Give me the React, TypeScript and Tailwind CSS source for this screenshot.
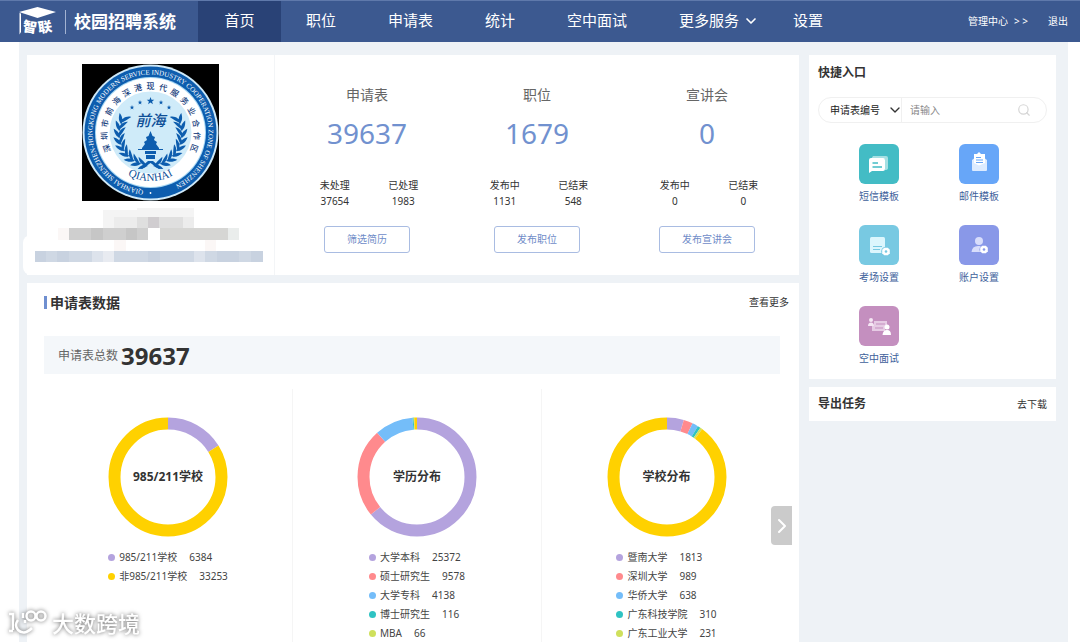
import { ReactNode } from "react";
import { ChevronDown, ChevronRight, Search } from "lucide-react";

const navItems = [
  { label: "首页", className: "w-[83px] bg-[#294276]" },
  { label: "职位", className: "w-[80px]" },
  { label: "申请表", className: "w-[99px]" },
  { label: "统计", className: "w-[80px]" },
  { label: "空中面试", className: "w-[114px]" },
  { label: "更多服务", className: "w-[130px]", more: true },
  { label: "设置", className: "w-[48px]" },
];

const stats = [
  {
    title: "申请表",
    total: 39637,
    parts: [
      { label: "未处理", value: 37654 },
      { label: "已处理", value: 1983 },
    ],
    action: "筛选简历",
  },
  {
    title: "职位",
    total: 1679,
    parts: [
      { label: "发布中", value: 1131 },
      { label: "已结束", value: 548 },
    ],
    action: "发布职位",
  },
  {
    title: "宣讲会",
    total: 0,
    parts: [
      { label: "发布中", value: 0 },
      { label: "已结束", value: 0 },
    ],
    action: "发布宣讲会",
  },
];

const TOTAL = 39637;
const palette = ["#b4a3de", "#ff8a8d", "#74bdf9", "#2fc3c3", "#cfe05c"];
const yellow = "#ffd100";

const charts = [
  {
    title: "985/211学校",
    items: [
      { label: "985/211学校", value: 6384, color: palette[0] },
      { label: "非985/211学校", value: 33253, color: yellow },
    ],
  },
  {
    title: "学历分布",
    items: [
      { label: "大学本科", value: 25372, color: palette[0] },
      { label: "硕士研究生", value: 9578, color: palette[1] },
      { label: "大学专科", value: 4138, color: palette[2] },
      { label: "博士研究生", value: 116, color: palette[3] },
      { label: "MBA", value: 66, color: palette[4] },
    ],
  },
  {
    title: "学校分布",
    items: [
      { label: "暨南大学", value: 1813, color: palette[0] },
      { label: "深圳大学", value: 989, color: palette[1] },
      { label: "华侨大学", value: 638, color: palette[2] },
      { label: "广东科技学院", value: 310, color: palette[3] },
      { label: "广东工业大学", value: 231, color: palette[4] },
    ],
  },
];

const Logo = () => (
  <svg width="38" height="32" viewBox="0 0 38 32" fill="#fff">
    <path d="M0 6 L18.5 1 L37 6 L18.5 12 Z" />
    <path d="M0.5 7 L2 7.5 V26 L0.5 28.5 Z" />
    <text x="4" y="26" fontSize="14" fontWeight="900" transform="rotate(8 11 21)">
      智
    </text>
    <text x="19" y="26" fontSize="14" fontWeight="900" transform="rotate(-8 26 21)">
      联
    </text>
  </svg>
);

const star = "M0 -4 L1 -1.3 L3.8 -1.2 L1.6 0.5 L2.4 3.2 L0 1.6 L-2.4 3.2 L-1.6 0.5 L-3.8 -1.2 L-1 -1.3 Z";
const leafAngles = [14, 27, 40, 53, 66, 79, 92, 105, 118];

const Seal = () => (
  <svg width="137" height="137" viewBox="0 0 137 137">
    <defs>
      <path id="ring" d="M68.5 126.5 A58 58 0 0 1 68.5 10.5 A58 58 0 0 1 68.5 126.5" />
      <path id="bottom" d="M20 68.5 A48.5 48.5 0 0 0 117 68.5" />
    </defs>
    <rect width="137" height="137" fill="#000" />
    <circle cx="68.5" cy="68.5" r="68" fill="#cfe9f8" />
    <circle cx="68.5" cy="68.5" r="66" fill="#0d5dae" />
    <circle cx="68.5" cy="68.5" r="55.5" fill="#a9d8f3" />
    <circle cx="68.5" cy="68.5" r="54.5" fill="#fff" />
    <circle cx="68.5" cy="68.5" r="41" fill="#cfebf9" />
    <text fontSize="7" fill="#fff" fontFamily="Liberation Serif, serif">
      <textPath href="#ring" startOffset="7">
        QIANHAI SHENZHEN-HONGKONG MODERN SERVICE INDUSTRY COOPERATION ZONE OF SHENZHEN
      </textPath>
    </text>
    <circle cx="68.5" cy="129" r="0.9" fill="#fff" />
    {"深圳市前海深港现代服务业合作区".split("").map((char, i) => (
      <text
        key={i}
        x="68.5"
        y="25"
        fontSize="8"
        fontWeight="500"
        textAnchor="middle"
        fill="#16407c"
        transform={`rotate(${(i - 7) * 15.7} 68.5 68.5)`}
      >
        {char}
      </text>
    ))}
    <text
      fontSize="11"
      fill="#0d4f97"
      textAnchor="middle"
      fontFamily="Liberation Serif, serif"
    >
      <textPath href="#bottom" startOffset="50%">
        QIANHAI
      </textPath>
    </text>
    <g fill="#0d5dae">
      <path d={star} transform="translate(68.5 37)" />
      <path d={star} transform="translate(58 38.5) scale(0.6)" />
      <path d={star} transform="translate(79 38.5) scale(0.6)" />
      <path d={star} transform="translate(50 43.5) scale(0.6)" />
      <path d={star} transform="translate(87 43.5) scale(0.6)" />
      <path d="M68.5 67 L70.5 72 L73 73 L72 76 L75 78 L74 80 L77 84 V86 H60 V84 L63 80 L62 78 L65 76 L64 73 L66.5 72 Z" />
      <path d="M63 87 H74 V90 H63 Z M64 91 H73 V95 H64 Z M56 85 H81 V86 H56 Z" />
      {leafAngles.map((a) => (
        <g key={a}>
          <g transform={`rotate(${a} 68.5 70) translate(68.5 101)`}>
            <path d="M5 1 C1 -2 -2 -4 -6 -6 C-5 -1 0 2 5 1 Z M5 -1 C0 0 -2 2 -4 6 C1 5 4 3 5 -1 Z" />
          </g>
          <g transform={`rotate(${-a} 68.5 70) translate(68.5 101)`}>
            <path d="M-5 1 C-1 -2 2 -4 6 -6 C5 -1 0 2 -5 1 Z M-5 -1 C0 0 2 2 4 6 C-1 5 -4 3 -5 -1 Z" />
          </g>
        </g>
      ))}
      <path d="M66 97 L58 104 L60 105 L68.5 99 L77 105 L79 104 L71 97 Z" />
    </g>
    <text
      x="68.5"
      y="62"
      fontSize="15"
      fontWeight="500"
      fontStyle="italic"
      textAnchor="middle"
      fill="#0d4f97"
    >
      前海
    </text>
  </svg>
);

// Masked company name and account lines
const MaskedInfo = () => (
  <svg width="230" height="56" viewBox="0 0 230 56" shapeRendering="crispEdges">
    <path fill="#f4f4f4" d="M69 2 H103 V0 H160 V20 H69 Z" />
    <path fill="#ececec" d="M80 9 H103 V20 H80 Z M149 9 H160 V20 H149 Z" />
    <path fill="#dfdfdf" d="M103 9 H149 V20 H103 Z" />
    <path fill="#d0cdd0" d="M114 9 H125 V20 H114 Z" />
    <path fill="#cfcfcf" d="M35 20 H114 V32 H35 Z" />
    <path fill="#c6c6c6" d="M57 20 H69 V32 H57 Z M92 20 H103 V32 H92 Z" />
    <path fill="#d6d6d4" d="M126 20 H194 V32 H126 Z" />
    <path fill="#eaedec" d="M194 20 H205 V32 H194 Z" />
    <path fill="#fbf7f6" d="M24 20 H35 V32 H24 Z M80 32 H92 V43 H80 Z M171 32 H182 V43 H171 Z" />
    <path fill="#cfd8e4" d="M1 43 H229 V54 H1 Z" />
    <path fill="#c8d2e0" d="M1 43 H12 V54 H1 Z M23 43 H35 V54 H23 Z M114 43 H126 V54 H114 Z M183 43 H205 V54 H183 Z M217 43 H229 V54 H217 Z" />
    <path fill="#dde3ec" d="M58 43 H69 V54 H58 Z M160 43 H171 V54 H160 Z" />
    <path fill="#e8ebf1" d="M69 43 H80 V54 H69 Z" />
  </svg>
);

const Gear = ({ x, y, hole }: { x: number; y: number; hole: string }) => (
  <g transform={`translate(${x} ${y})`}>
    <path
      fill="#fff"
      d="M-1.8 -3.8 H1.8 L3.8 -1.8 V1.8 L1.8 3.8 H-1.8 L-3.8 1.8 V-1.8 Z"
    />
    <circle r="1.3" fill={hole} />
  </g>
);

const shortcuts: { label: string; color: string; icon: ReactNode }[] = [
  {
    label: "短信模板",
    color: "bg-[#43bcc5]",
    icon: (
      <>
        <path fill="#a5e0e3" d="M14 12 H27 Q29 12 29 14 V24 Q29 26 26 26 V15 H12 Z" />
        <path fill="#fff" d="M12 14 H24 Q26 14 26 16 V25 Q26 27 24 27 H13 L10 29 V16 Q10 14 12 14 Z" />
        <path stroke="#43bcc5" strokeWidth="1.4" d="M13.5 19 H19 M13.5 23 H23" />
      </>
    ),
  },
  {
    label: "邮件模板",
    color: "bg-[#67a6f8]",
    icon: (
      <>
        <path fill="#fff" d="M18 10 L20 8 L22 10 H26 V22 H15 V10 Z" />
        <path stroke="#67a6f8" strokeWidth="1.2" d="M17 13.5 H22 M17 16 H24 M17 18.5 H24" />
        <path fill="#dcebff" d="M13 16 L15 14.5 V19 L20 21.5 L26 19 V14.5 L28 16 V26 Q28 27 27 27 H14 Q13 27 13 26 Z" />
      </>
    ),
  },
  {
    label: "考场设置",
    color: "bg-[#78c9e2]",
    icon: (
      <>
        <rect x="11" y="12" width="15" height="16" rx="1.5" fill="#dcf6fd" />
        <path stroke="#78c9e2" strokeWidth="1.2" d="M14 21.5 H23 M14 24.5 H21" />
        <circle cx="27" cy="26.5" r="4.8" fill="#78c9e2" />
        <Gear x={27} y={26.5} hole="#78c9e2" />
      </>
    ),
  },
  {
    label: "账户设置",
    color: "bg-[#8998e8]",
    icon: (
      <>
        <circle cx="20" cy="16" r="4" fill="#d8ddfb" />
        <path fill="#d8ddfb" d="M12.5 27 Q13 21 19 21 H23 V27 Z" />
        <circle cx="25" cy="24.5" r="4.5" fill="#8998e8" />
        <Gear x={25} y={24.5} hole="#8998e8" />
      </>
    ),
  },
  {
    label: "空中面试",
    color: "bg-[#c48fbf]",
    icon: (
      <>
        <path fill="#e6cbe4" d="M15 15 H28 V19 H26 V25 H13 V20 H15 Z" />
        <path stroke="#c48fbf" strokeWidth="1" d="M17 18 H26 M16 22 H24" />
        <circle cx="12" cy="14" r="2" fill="#f5e6f4" />
        <path fill="#f5e6f4" d="M9 20 Q9 16.5 12 16.5 Q15 16.5 15 20 Z" />
        <circle cx="28" cy="21" r="2.5" fill="#fff" />
        <path fill="#fff" d="M23.5 29 Q24 24 28 24 Q32 24 32 29 Z" />
      </>
    ),
  },
];

type Slice = { label: string; value: number; color: string };

const Donut = ({ title, items }: { title: string; items: Slice[] }) => {
  const radius = 53.5;
  const length = 2 * Math.PI * radius;
  const rest = TOTAL - items.reduce((sum, item) => sum + item.value, 0);
  const slices = [...items, { label: "其他", value: rest, color: yellow }];
  let offset = 0;
  return (
    <div className="grid place-items-center">
      <svg
        width="120"
        height="120"
        viewBox="0 0 120 120"
        fill="none"
        strokeWidth="12"
        className="col-start-1 row-start-1 -rotate-90"
      >
        {slices.map((item) => {
          const part = (item.value / TOTAL) * length;
          const start = offset;
          offset += part;
          return (
            <circle
              key={item.label}
              cx="60"
              cy="60"
              r={radius}
              stroke={item.color}
              strokeDasharray={`${part} ${length - part}`}
              strokeDashoffset={-start}
            />
          );
        })}
      </svg>
      <h3 className="col-start-1 row-start-1 text-xs font-bold">{title}</h3>
    </div>
  );
};

const Header = () => (
  <header className="flex h-[42px] items-stretch border-t border-[#5f79ab] bg-[#3c5990] pr-3 text-white">
    <div className="flex w-[198px] shrink-0 items-center pl-[19px]">
      <Logo />
      <span className="ml-2 h-6 w-px bg-[#a3b3d2]" />
      <h1 className="ml-2 text-[17px] leading-6 font-bold whitespace-nowrap">校园招聘系统</h1>
    </div>
    <nav className="flex">
      {navItems.map((item) => (
        <a
          key={item.label}
          href="#"
          className={`flex shrink-0 items-center justify-center pb-0.5 text-[15px] whitespace-nowrap ${item.className}`}
        >
          {item.label}
          {item.more && <ChevronDown className="ml-1 size-4" strokeWidth={2.5} />}
        </a>
      ))}
    </nav>
    <div className="ml-auto flex items-center gap-5 text-[10px] whitespace-nowrap">
      <a href="#" className="flex gap-1.5">
        管理中心 <span>&gt; &gt;</span>
      </a>
      <a href="#">退出</a>
    </div>
  </header>
);

const Overview = () => (
  <section className="flex h-[220px] bg-white">
    <div className="relative flex w-[248px] shrink-0 flex-col items-center border-r border-[#f3f5f7] pt-[9px]">
      <span className="absolute bottom-0 -left-1 h-10 w-2 rounded-l-full bg-white" />
      <Seal />
      <div className="mt-[7px] mr-1">
        <MaskedInfo />
      </div>
    </div>
    <div className="grid flex-1 grid-cols-3 px-[7px] pt-7">
      {stats.map((stat) => (
        <div key={stat.title} className="flex flex-col items-center">
          <h2 className="text-[14px] leading-6 text-[#666]">{stat.title}</h2>
          <p className="mt-1 text-[28px] leading-11 text-[#7191cf]">{stat.total}</p>
          <dl className="mt-[22px] ml-1 grid w-[137px] grid-cols-2 text-center text-[10px] leading-4 text-[#333]">
            {stat.parts.map((part) => (
              <div key={part.label}>
                <dt>{part.label}</dt>
                <dd>{part.value}</dd>
              </div>
            ))}
          </dl>
          <button className="mt-[17px] h-[27px] rounded-[3px] border border-[#a9bce2] px-[22px] text-[10px] text-[#6f8cc8]">
            {stat.action}
          </button>
        </div>
      ))}
    </div>
  </section>
);

const ApplicationData = () => (
  <section className="relative flex-1 bg-white pt-[7px]">
    <div className="flex h-6 items-center justify-between pr-[10px] pl-[17px]">
      <h2 className="flex items-center gap-[3px] text-[14px] font-bold">
        <span className="h-[13px] w-[3px] bg-[#6f8fd0]" />
        申请表数据
      </h2>
      <a href="#" className="text-[10px]">
        查看更多
      </a>
    </div>
    <p className="mr-[19px] ml-[17px] mt-[22px] flex h-[38px] items-center gap-[3px] bg-[#f4f7fa] pt-0.5 pl-[14px] text-[12px] text-[#666]">
      申请表总数
      <strong className="text-[24px] leading-8 text-[#333]">{TOTAL}</strong>
    </p>
    <div className="mt-[15px] mr-2 ml-[17px] grid grid-cols-3 divide-x divide-[#f5f5f5]">
      {charts.map((chart) => (
        <div key={chart.title} className="flex flex-col items-center pt-7">
          <Donut title={chart.title} items={chart.items} />
          <ul className="mt-[11px] text-[10px] leading-[19px] text-[#444]">
            {chart.items.map((item) => (
              <li key={item.label} className="flex items-center">
                <span
                  className="mr-1 size-[7px] rounded-full"
                  style={{ backgroundColor: item.color }}
                />
                {item.label}
                <span className="ml-3">{item.value}</span>
              </li>
            ))}
          </ul>
        </div>
      ))}
    </div>
    <button
      aria-label="下一页"
      className="absolute top-[223px] right-[7px] flex h-[39px] w-[21px] items-center justify-center rounded-l bg-[#cbcbcb] text-white"
    >
      <ChevronRight className="size-6 shrink-0" strokeWidth={2} />
    </button>
  </section>
);

const Shortcuts = () => (
  <section className="h-[324px] bg-white px-[9px] pt-2">
    <h2 className="text-[12px] leading-5 font-bold">快捷入口</h2>
    <form className="mt-[14px] flex h-[26px] items-center rounded-full border border-[#f0f0f0] text-[10px]">
      <div className="relative flex h-full items-center border-r border-[#f0f0f0]">
        <select
          aria-label="查询字段"
          className="w-[82px] appearance-none bg-transparent pl-[11px] text-[#222] outline-none"
        >
          <option>申请表编号</option>
        </select>
        <ChevronDown className="pointer-events-none absolute -right-0.5 size-4" />
      </div>
      <input
        aria-label="关键字"
        placeholder="请输入"
        className="min-w-0 flex-1 pl-2 outline-none placeholder:text-[#888]"
      />
      <button type="button" aria-label="搜索" className="mr-[15px] text-[#d5d5d5]">
        <Search className="size-3.5" />
      </button>
    </form>
    <div className="mt-[21px] grid grid-cols-2 gap-y-[21px] pr-[18px] pl-[11px]">
      {shortcuts.map((item) => (
        <a
          key={item.label}
          href="#"
          className="flex flex-col items-center gap-1 text-[10px] leading-4 text-[#405f9b]"
        >
          <span className={`rounded-md ${item.color}`}>
            <svg width="40" height="40" viewBox="0 0 40 40" fill="none">
              {item.icon}
            </svg>
          </span>
          {item.label}
        </a>
      ))}
    </div>
  </section>
);

const Watermark = () => (
  <div className="absolute bottom-1 left-2 flex items-center gap-1 text-white drop-shadow-[0_0_2px_#666]">
    <svg width="40" height="30" viewBox="0 0 40 30" fill="none" stroke="#fff" strokeWidth="2.5">
      <path d="M1 6 H5 V22 M1 23 H5" />
      <path d="M10 12 Q6 17 10 22 Q16 28 24 20" />
      <path d="M15 10 V5 M17 12 V15" />
      <circle cx="23" cy="8" r="4.5" />
      <circle cx="33" cy="8" r="4.5" />
    </svg>
    <span className="text-[22px] leading-8 font-medium">大数跨境</span>
  </div>
);

const App = () => {
  return (
    <div className="relative flex min-h-screen flex-col bg-white font-['Noto_Sans','Noto_Sans_CJK_SC',sans-serif] text-[#333]">
      <Header />
      <main className="mr-3 ml-[19px] flex flex-1 gap-[10px] bg-[#eef2f6] pt-[13px] pr-3 pl-2">
        <div className="flex flex-1 flex-col gap-2">
          <Overview />
          <ApplicationData />
        </div>
        <aside className="flex w-[247px] shrink-0 flex-col gap-2">
          <Shortcuts />
          <section className="flex h-[34px] items-center justify-between bg-white px-[9px]">
            <h2 className="text-[12px] font-bold">导出任务</h2>
            <a href="#" className="text-[10px]">
              去下载
            </a>
          </section>
        </aside>
      </main>
      <Watermark />
    </div>
  );
};

export default App;
